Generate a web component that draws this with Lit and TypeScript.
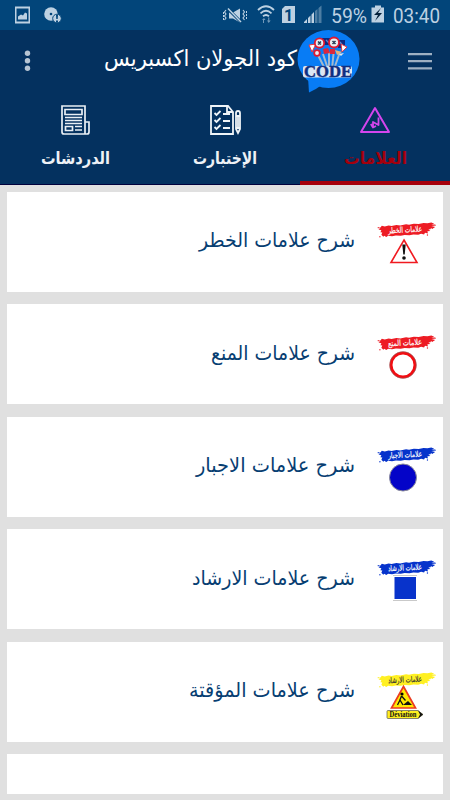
import { LitElement, html, svg, css } from "lit";
import { customElement, property } from "lit/decorators.js";

const arabic = (label: string, width: number, size: number, height: number, baseline: number) => html`
  <svg class="label" width=${width} height=${height} role="img">
    <text x=${width} y=${baseline} direction="rtl" font-size=${size} textLength=${width} lengthAdjust="spacingAndGlyphs">${label}</text>
  </svg>`;

type Sign = "danger" | "forbid" | "oblige" | "guide" | "works";

const signs = {
  danger: svg`<path d="M28 18L41 40.500H15Z" fill="#fff" stroke="#f01a20" stroke-width="1.600"/><path d="M26.300 22.500h3.400l-1 10h-1.400z" fill="#111"/><circle cx="28" cy="36" r="1.800" fill="#111"/>`,
  forbid: svg`<circle cx="27" cy="30" r="12" fill="#fff" stroke="#f20d12" stroke-width="3"/><circle cx="27" cy="30" r="13.400" fill="none" stroke="#777" stroke-width=".5"/>`,
  oblige: svg`<circle cx="27" cy="30.500" r="13.500" fill="#0404c8" stroke="#8b8b98" stroke-width="1"/>`,
  guide: svg`<path d="M17 15.500h24M17 40.500h24" stroke="#c9c9c9"/><rect x="18.500" y="17" width="21.500" height="22" fill="#0833cb"/>`,
  works: svg`<g transform="translate(1 -3)"><path d="M26.500 17.500L38.500 39H14.500Z" fill="#ffe800" stroke="#ea3b21" stroke-width="1.700"/><circle cx="25" cy="25" r="1.600"/><path d="M24.500 27l-2 5-2 4M23 31l3 5M24.500 27l4 4.500" fill="none" stroke="#111" stroke-width="1.300"/><path d="M26 36l5-4 4 4z" fill="#111"/><path d="M11 41.500h30l5 4-5 4H11q-1 0-1-1v-6q0-1 1-1z" fill="#ffef20" stroke="#555" stroke-width=".7"/><path d="M41 41.500l5 4-5 4 2-4z" fill="#111"/><text x="12.500" y="48" font-family="Liberation Serif, serif" font-weight="bold" font-size="7.500" textLength="27" lengthAdjust="spacingAndGlyphs" fill="#111">Déviation</text></g>`,
};

@customElement("sign-badge")
class SignBadge extends LitElement {
  @property() kind: Sign = "danger";
  @property() caption = "";
  @property() paint = "";
  @property() ink = "#fff";
  static styles = css`:host{display:block;width:60px;height:52px} svg{display:block;overflow:visible}`;
  render() {
    return html`<svg width="60" height="52" viewBox="0 0 60 52">
      <g transform="translate(1 .6) scale(.97 1.080)" fill=${this.paint}>
        <path d="M0 5l2-1 1 1 2-2 3 .5 4-.8 3 .5 5-1 4 .6 6-1.300 3 .5 5-1 5 .3 5-1 4 .2 4-.5 3 1-3 .7 4 .1 1 1-5 .3 4 .9-2 1.200-3-.2 1 1-3 .3 2 1.500-3 .2.500 2-3-.6-1 1.600-3-.7-3 1-5-.3-4 .8-5-.4-4 .8-5-.3-4 .7-4-.4-2 1.200-2-1.200-1 1-2-2 1-2-2-.2 1-2-3-.5 2-1z"/>
        <circle cx="3" cy="13" r=".7"/><circle cx="52" cy="11.500" r=".7"/><circle cx="57" cy="5" r=".8"/>
      </g>
      <text x="46" y="10.500" direction="rtl" font-family="DejaVu Sans, sans-serif" font-size="8" textLength="34" lengthAdjust="spacingAndGlyphs" fill=${this.ink} stroke=${this.ink} stroke-width=".2" transform="rotate(-3 28 8)">${this.caption}</text>
      ${signs[this.kind]}
    </svg>`;
  }
}

@customElement("status-bar")
class StatusBar extends LitElement {
  static styles = css`
    :host{display:flex;height:30px;flex:none;background:#02457a;color:#c4d5e3;align-items:center}
    svg{display:block}
  `;
  render() {
    return html`<svg width="450" height="30" viewBox="0 0 450 30" fill="#bdd1e2">
      <path fill-rule="evenodd" d="M15 6.500h15v17H15zm1.500 2v13h12v-13z"/><path d="M18 19.500v-3l3-2 2 1 2-3 2 1v6z"/>
      <circle cx="51" cy="14" r="6.800"/><circle cx="51" cy="14" r="1.300" fill="#02457a"/><circle cx="57" cy="18.500" r="4.300" stroke="#02457a"/><path d="M56 15h2l-.3 4h-1.400zM56 20.500h2v1.500h-2z" fill="#02457a"/>
      <path d="M229 12.500h4l7-4v14l-7-4h-4z"/><path d="M228 9l13 13" stroke="#02457a" stroke-width="3"/><path d="M228 8.500l13 13.500" stroke="#bdd1e2" stroke-width="1.500"/><path d="M226 10l-1.500 2 1.500 2-1.500 2 1.500 2-1.500 2M243 10l1.500 2-1.500 2 1.500 2-1.500 2 1.500 2" fill="none" stroke="#bdd1e2" stroke-width="1.100"/><path d="M223.500 12v8M246.500 11v9" stroke="#bdd1e2" stroke-width="1" stroke-dasharray="2 1"/>
      <g fill="none" stroke="#bdd1e2" stroke-width="1.800"><path d="M258 10q8-7.500 16 0M260.500 13.300q5.500-5 11 0M263 16.300q3-2.600 6 0"/></g><path d="M262 20l2-2 1.500 2H264v3h-1v-3zM267 20.500h1.200v-3h1.100v3h1.400l-2 2.500z" opacity=".6"/>
      <path d="M285 6h10v17h-13V9z"/><text x="284" y="20.500" font-family="Roboto, sans-serif" font-weight="bold" font-size="16" fill="#02457a">1</text>
      <path d="M304 23v-1l3-3v4zM308 23v-5l2.500-2.500V23zM311.500 23v-8.500L314 12v11z"/><path d="M315 23V11l2.500-2v14zM318.500 23V8l3-2.500V23z" opacity=".4"/>
      <text x="331" y="23" font-family="Roboto, sans-serif" font-size="20" textLength="36" lengthAdjust="spacingAndGlyphs">59%</text>
      <path d="M375 5.500h6v2h3v15h-12.500v-15h3.500z" transform="translate(28.200) scale(1 1) translate(-28.200)"/><path d="M381 8l-7 7h4l-3 6 7-8h-4z" fill="#05213b"/>
      <text x="393" y="23" font-family="Roboto, sans-serif" font-size="20" textLength="47" lengthAdjust="spacingAndGlyphs">03:40</text>
    </svg>`;
  }
}

const logo = html`<svg class="logo" width="64" height="64" viewBox="0 0 64 64">
  <ellipse cx="31.500" cy="29" rx="31" ry="29" fill="#087cf5"/><path d="M11 47l1 15.500q7-3 12-7z" fill="#087cf5"/>
  <path d="M20 23l8 16M26 24l5 15M32 22v17M37 19l-2 20M43 22l-6 17" stroke="#a3b9cf" stroke-width="2"/>
  <path d="M25 8h13v7H25zM41 10h7v8h-7z" fill="#0b2a80"/><path d="M29 10l3 3M43 12l3 4" stroke="#5f88c9" stroke-width="1.300"/>
  <path d="M12 15l7-1-4 8zM44 14l6 3-5 5z" fill="#fff" stroke="#e33542"/>
  <g fill="#e8edf2" stroke="#df1931" stroke-width="1.800"><circle cx="22.500" cy="13" r="4.700"/><circle cx="37" cy="12.500" r="5"/><circle cx="20" cy="23" r="2.800"/></g>
  <path d="M21 11.500l3 3m0-3l-3 3M35.500 11l3 3m0-3l-3 3" stroke="#293852" stroke-width="1.500"/>
  <path d="M26 19l5-1 2 5-6 1zM33 19h5v5h-5z" fill="#db283e"/><path d="M38 20l7 2-5 3z" fill="#e4b27a"/><path d="M42 24l5-1-3 3z" fill="#dce7ee"/>
  <rect x="6" y="36" width="49" height="11.500" rx="2" fill="#dce6f3"/>
  <text x="7" y="47" font-family="Liberation Serif, serif" font-weight="bold" font-size="17" textLength="48" lengthAdjust="spacingAndGlyphs" fill="#102f80" stroke="#102f80" stroke-width=".5">CODE</text>
</svg>`;

@customElement("app-root")
class AppRoot extends LitElement {
  static styles = css`
    :host{display:flex;flex-direction:column;width:450px;height:800px;overflow:hidden;background:#e0e0e0;font-family:"DejaVu Sans",sans-serif}
    svg{display:block;flex:none}
    .label{overflow:visible;fill:currentColor}
    .header{height:60px;flex:none;position:relative;z-index:1;background:#04315f;color:#fff;display:flex;align-items:flex-start}
    .dots{margin:20px 71px 0 23px}
    .title{margin-top:12px}
    .menu{margin:22px 0 0 47px}
    .tabs{height:95px;flex:none;display:grid;grid-template-columns:repeat(3,1fr);background:#04315f;color:#eef1f6}
    .tab{box-sizing:border-box;display:flex;flex-direction:column;align-items:center;border-bottom:1px solid #00003c;padding-top:13px;font-weight:bold}
    .active{color:#a4000c;border-bottom:4px solid #a6000b}
    .tab .label{margin-top:10px}
    .list{height:615px;flex:none;overflow:hidden;box-sizing:border-box;padding:6.500px 7px 0;display:flex;flex-direction:column;gap:12.500px}
    .card{height:100px;flex:none;box-sizing:border-box;background:#fff;color:#073e72;display:flex;justify-content:flex-end;align-items:flex-start;gap:21px;padding:30.500px 7px 0 0}
    .card .label{margin-top:4px}
    .last{height:40px}
  `;
  private rows: { text: string; width: number; kind: Sign; caption: string; paint: string; ink: string }[] = [
    { text: "شرح علامات الخطر", width: 156, kind: "danger", caption: "علامات الخطر", paint: "#ed1c24", ink: "#fff" },
    { text: "شرح علامات المنع", width: 144, kind: "forbid", caption: "علامات المنع", paint: "#ed1c24", ink: "#fff" },
    { text: "شرح علامات الاجبار", width: 159, kind: "oblige", caption: "علامات الاجبار", paint: "#0633cb", ink: "#fff" },
    { text: "شرح علامات الارشاد", width: 163, kind: "guide", caption: "علامات الارشاد", paint: "#0633cb", ink: "#fff" },
    { text: "شرح علامات المؤقتة", width: 166, kind: "works", caption: "علامات الارشاد", paint: "#fff022", ink: "#333" },
  ];
  render() {
    return html`
      <status-bar></status-bar>
      <div class="header">
        <svg class="dots" width="10" height="22" fill="#b7c4d2"><circle cx="4.500" cy="3.300" r="2.700"/><circle cx="4.500" cy="10.800" r="2.700"/><circle cx="4.500" cy="18.300" r="2.700"/></svg>
        <div class="title">${arabic("كود الجولان اكسبريس", 193, 22, 34, 24)}</div>
        ${logo}
        <svg class="menu" width="24" height="20" fill="#9eb0c2"><path d="M0 1h24v2.300H0zM0 8h24v2.300H0zM0 15.200h24v2.300H0z"/></svg>
      </div>
      <div class="tabs">
        <div class="tab">
          <svg width="32" height="34" viewBox="0 0 32 34" fill="none" stroke="#e9eff5" stroke-width="1.700"><path d="M3 3h23v28H5q-2 0-2-2zM26 19h4v10q0 2-2 2h-2"/><path d="M6 6.500h17v5H6zM6 14.500h17M6 17.500h17M6 20.500h17M16 23.500h7M16 27h7"/><path d="M6.500 23.500h7v4h-7z"/></svg>
          ${arabic("الدردشات", 69, 17, 26, 17)}
        </div>
        <div class="tab">
          <svg width="34" height="34" viewBox="0 0 34 34" fill="none" stroke="#eff4f8" stroke-width="1.800"><path d="M3 3h17l5 6v22H3zM19 3v6h6"/><path d="M6.500 10l2 2 4-4M15 11h7M6.500 17l2 2 4-4M15 18h7M6.500 24l2 2 4-4M15 25h7"/><path d="M28 10q0-2 2-2t2 2v16l-2 4-2-4zM28 13h4M28 25h4M30 13v12"/></svg>
          ${arabic("الإختبارت", 64, 17, 26, 17)}
        </div>
        <div class="tab active">
          <svg width="34" height="34" viewBox="0 0 34 34" fill="none" stroke="#d445ed" stroke-linejoin="round" stroke-width="2"><path d="M17 5L31 29H3Z"/><path d="M20.500 14.500v7.500l-5.500-3v5M12.800 21l2.200 3.500 3-1.500" stroke-width="1.800"/></svg>
          ${arabic("العلامات", 63, 17, 26, 17)}
        </div>
      </div>
      <div class="list">
        ${this.rows.map((r) => html`<div class="card">
          ${arabic(r.text, r.width, 20, 32, 21)}
          <sign-badge .kind=${r.kind} .caption=${r.caption} .paint=${r.paint} .ink=${r.ink}></sign-badge>
        </div>`)}
        <div class="card last"></div>
      </div>`;
  }
}
